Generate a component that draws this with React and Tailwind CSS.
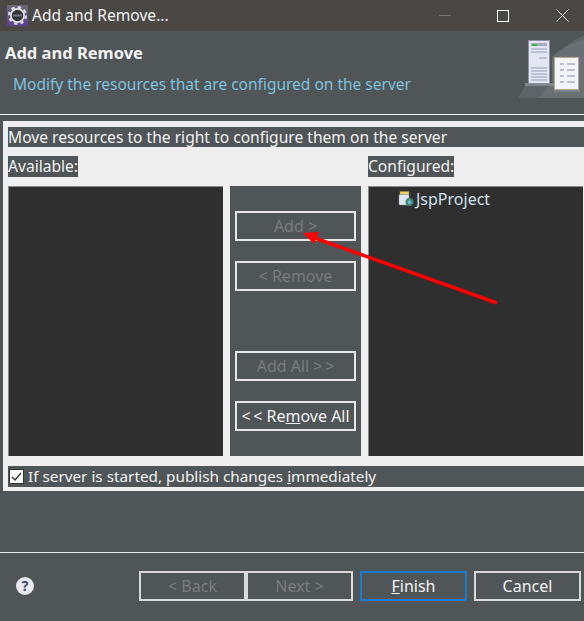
import React from 'react';

const font = { fontFamily: '"Noto Sans", "Open Sans", sans-serif' };

const ActionButton = ({ children, disabled, className = '' }) => (
    <button
        type='button'
        className={`h-[30px] w-[121px] border-2 border-[#e6e6e6] bg-[#505558] text-[16px] leading-[26px] ${disabled ? 'text-[#7a7c7d]' : 'text-[#f2f2f2]'} ${className}`}
    >
        {children}
    </button>
);

const FooterButton = ({ children, disabled, focused, className = '' }) => (
    <button
        type='button'
        className={`h-[30px] w-[107px] border-2 bg-[#505558] text-[16px] leading-[26px] ${focused ? 'border-[#1b7bd0]' : 'border-[#d9d9d9]'} ${disabled ? 'text-[#7a7c7d]' : 'text-[#f2f2f2]'} ${className}`}
    >
        {children}
    </button>
);

const AppIcon = () => (
    <svg width='21' height='21' viewBox='0 0 21 21' className='shrink-0'>
        <defs>
            <linearGradient id='appBg' x1='0' y1='0' x2='0' y2='1'>
                <stop offset='0' stopColor='#6a6a70' />
                <stop offset='1' stopColor='#5a3f92' />
            </linearGradient>
        </defs>
        <rect width='21' height='21' fill='url(#appBg)' />
        <circle cx='10.5' cy='10.5' r='8.4' fill='none' stroke='#dcdce0' strokeWidth='2.2' strokeDasharray='3.4 3.2' />
        <circle cx='10.5' cy='10.5' r='6.6' fill='#34343a' stroke='#e8e8ec' strokeWidth='1.6' />
        <rect x='6' y='9.5' width='9' height='2' fill='#77778c' />
    </svg>
);

const ServerArt = () => (
    <svg width='66' height='66' viewBox='0 0 66 66' className='absolute right-0 top-[3px]'>
        <path d='M0 64 L9 49 L34 49 L34 23 C44 14 54 7 66 1 L66 64 Z' fill='#5f6468' />
        <path d='M20 64 L34 49 L34 23 C44 14 54 9 66 5 L66 64 Z' fill='#6a6f73' />
        <rect x='7' y='49' width='30' height='3' fill='#81858a' />
        <rect x='10.5' y='6.5' width='21' height='43' fill='#e3e6f2' stroke='#8b8fa8' />
        <rect x='13' y='9' width='16' height='3' fill='#a5a8c0' />
        <rect x='14' y='10' width='5' height='2' fill='#39b54a' />
        <path d='M13 15H29M13 18H29M21 24H29M13 34H29M13 37H29M13 40H29M13 43H29M13 46H29' stroke='#9a9db6' />
        <rect x='36.5' y='23.5' width='24' height='32' fill='#f1f4fa' stroke='#b8a98c' />
        <path d='M42 30H46M49 30H57M42 36H46M49 36H57M42 42H46M49 42H57M42 48H46M49 48H57' stroke='#a9adc4' strokeWidth='1.5' />
        <rect x='36' y='56' width='26' height='2' fill='#7d8186' />
    </svg>
);

const ProjectIcon = () => (
    <svg width='16' height='16' viewBox='0 0 16 16' className='shrink-0'>
        <rect x='2' y='0.5' width='9' height='3' fill='#f0d060' stroke='#a89040' strokeWidth='0.5' />
        <rect x='1' y='3.5' width='10' height='10.5' rx='1' fill='#dfe6f2' stroke='#8a98b0' strokeWidth='0.5' />
        <circle cx='11.5' cy='11' r='4' fill='#3d8a70' />
        <path d='M9.5 10.5 L12 9 L13.5 12 L11 13.5 Z' fill='#7cb8e8' />
    </svg>
);

export default function App() {
    return (
        <div className='relative flex h-[621px] w-[584px] flex-col overflow-hidden bg-[#505558]' style={font}>
            <div className='flex h-[31px] shrink-0 items-center bg-[#4a4845] pl-[7px] text-[15.6px] text-[#f2f2f2]'>
                <AppIcon />
                <span className='ml-[4px]'>Add and Remove...</span>
                <div className='ml-auto flex items-center'>
                    <span className='mr-[46px] h-px w-3 bg-[#78777a]' />
                    <span className='mr-[47px] h-3 w-3 border border-white' />
                    <svg width='13' height='13' viewBox='0 0 13 13' className='mr-[15px]'>
                        <path d='M0.5 0.5L12.5 12.5M12.5 0.5L0.5 12.5' stroke='#f2f2f2' />
                    </svg>
                </div>
            </div>

            <div className='relative h-[83px] shrink-0 pl-[5px]'>
                <div className='pt-[11px] text-[16.5px] font-bold leading-[22px] text-[#f2f2f2]'>Add and Remove</div>
                <div className='ml-[8px] mt-[9px] text-[15.5px] leading-[22px] text-[#7fc1de]'>Modify the resources that are configured on the server</div>
                <ServerArt />
            </div>
            <div className='h-px shrink-0 bg-[#f0f0f0]' />

            <div className='ml-[3px] mt-[6px] h-[370px] shrink-0 bg-[#efefef] pl-[5px] pt-[6px]'>
                <div className='h-[20px] bg-[#505558] text-[15.6px] leading-[20px] text-[#f2f2f2]'>Move resources to the right to configure them on the server</div>
                <div className='mt-[9px] flex h-[21px] text-[15.6px] leading-[21px] text-[#f2f2f2]'>
                    <span className='w-[70px] bg-[#505558]'>Available:</span>
                    <span className='ml-[290px] w-[86px] bg-[#505558]'>Configured:</span>
                </div>
                <div className='mt-[9px] flex h-[270px] gap-[7px]'>
                    <div className='w-[215px] border-l border-t border-[#8a8a8a] bg-[#2f2f2f]' />
                    <div className='flex w-[131px] flex-col items-center bg-[#505558] pt-[25px]'>
                        <ActionButton disabled>Add &gt;</ActionButton>
                        <ActionButton disabled className='mt-[20px]'>&lt; Remove</ActionButton>
                        <ActionButton disabled className='mt-[60px]'>Add All &gt;&#8201;&gt;</ActionButton>
                        <ActionButton className='mt-[20px]'>&lt;&#8201;&lt; Re<span className='underline'>m</span>ove All</ActionButton>
                    </div>
                    <div className='w-[215px] border-l border-t border-[#8a8a8a] bg-[#2f2f2f] pl-[29px] pt-[2px]'>
                        <div className='flex items-center text-[16px] leading-[20px] text-[#cfe0ee]'>
                            <ProjectIcon />
                            <span className='ml-[2px]'>JspProject</span>
                        </div>
                    </div>
                </div>
                <div className='mt-[10px] flex h-[21px] items-center bg-[#505558] text-[15.3px] text-[#f2f2f2]'>
                    <span className='ml-px flex h-[15px] w-[15px] items-center justify-center border border-[#333] bg-white'>
                        <svg width='11' height='11' viewBox='0 0 11 11'>
                            <path d='M1 6L4 9L10 2' fill='none' stroke='#333' strokeWidth='1.4' />
                        </svg>
                    </span>
                    <span className='ml-[4px]'>If server is started, publish changes <span className='underline'>i</span>mmediately</span>
                </div>
            </div>

            <div className='mt-[61px] h-px shrink-0 bg-[#e6e6e6]' />

            <div className='flex h-[68px] shrink-0 items-start pl-[16px] pt-[18px]'>
                <span className='mt-[6px] flex h-[18px] w-[18px] items-center justify-center rounded-full bg-[#e8eaf2] text-[14px] font-bold leading-none text-[#3b4a6b]'>?</span>
                <div className='ml-[105px] flex'>
                    <FooterButton disabled>&lt; Back</FooterButton>
                    <FooterButton disabled>Next &gt;</FooterButton>
                    <FooterButton focused className='ml-[7px]'><span className='underline'>F</span>inish</FooterButton>
                    <FooterButton className='ml-[7px]'>Cancel</FooterButton>
                </div>
            </div>

            <svg width='584' height='621' className='pointer-events-none absolute left-0 top-0'>
                <path d='M497 303L312 237' stroke='#ff0000' strokeWidth='3.5' />
                <path d='M303 233L319 232L314 244Z' fill='#ff0000' />
            </svg>
        </div>
    );
}
